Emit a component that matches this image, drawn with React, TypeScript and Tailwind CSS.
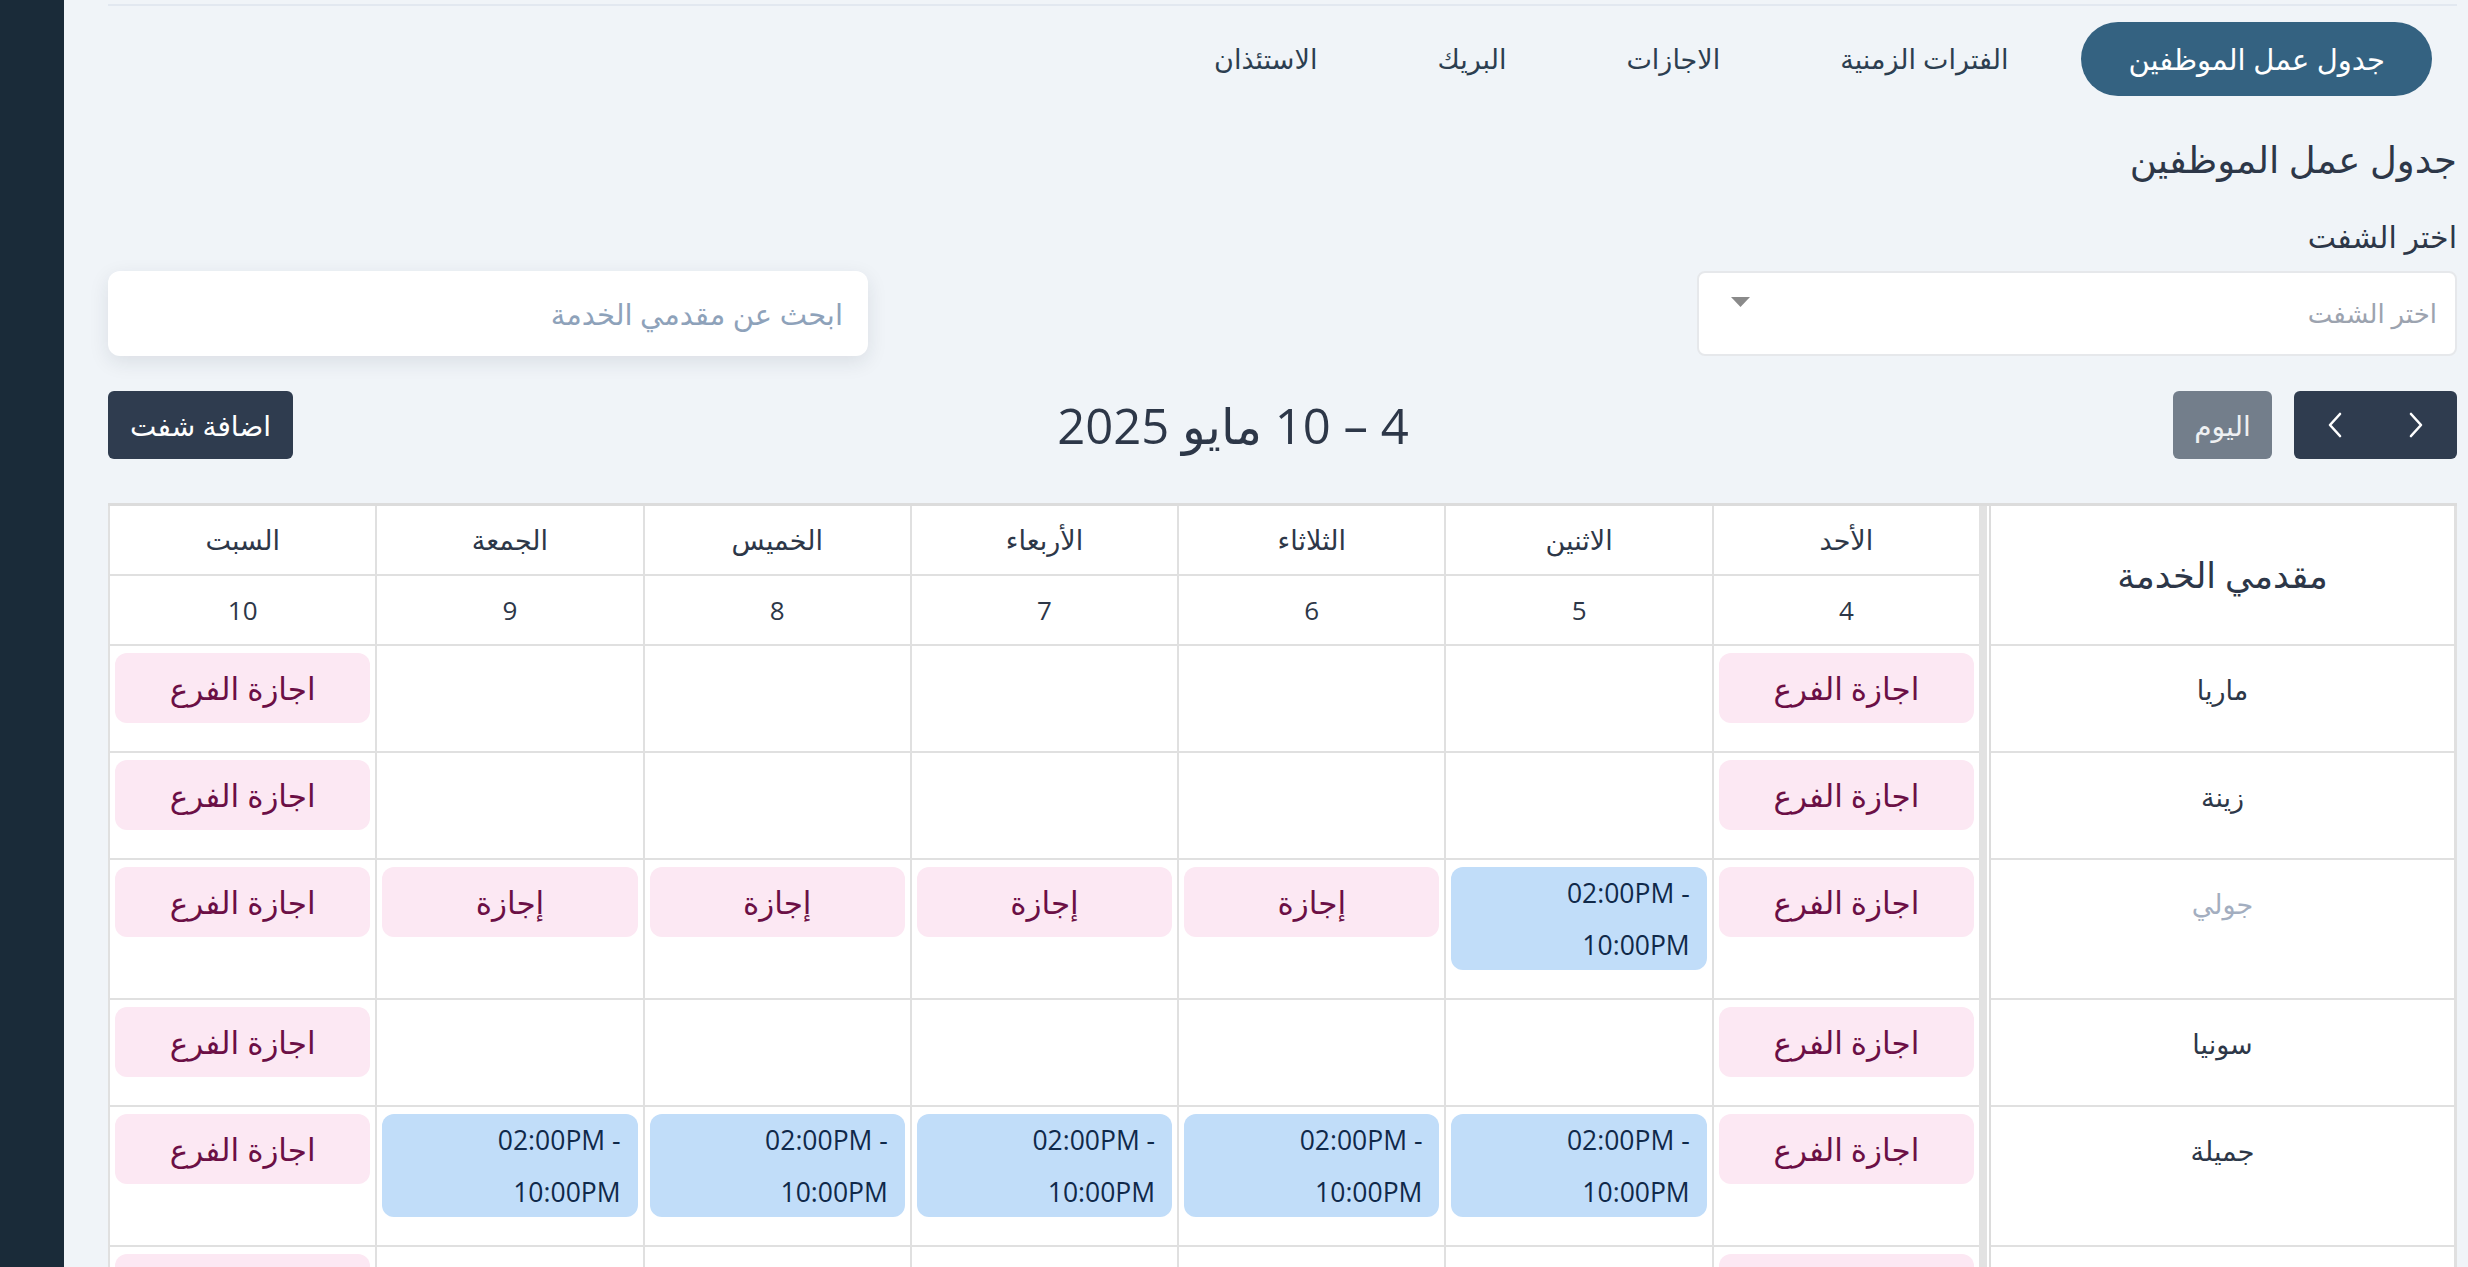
import React from 'react';

type Cell =
  | { kind: 'empty' }
  | { kind: 'leave'; label: string }
  | { kind: 'shift'; from: string; to: string };

interface Row {
  name: string;
  muted?: boolean;
  cells: Cell[];
}

const days = [
  { name: 'الأحد', date: 4 },
  { name: 'الاثنين', date: 5 },
  { name: 'الثلاثاء', date: 6 },
  { name: 'الأربعاء', date: 7 },
  { name: 'الخميس', date: 8 },
  { name: 'الجمعة', date: 9 },
  { name: 'السبت', date: 10 },
];

const tabs = ['جدول عمل الموظفين', 'الفترات الزمنية', 'الاجازات', 'البريك', 'الاستئذان'];

const E: Cell = { kind: 'empty' };
const BR: Cell = { kind: 'leave', label: 'اجازة الفرع' };
const LV: Cell = { kind: 'leave', label: 'إجازة' };
const SH: Cell = { kind: 'shift', from: '02:00PM -', to: '10:00PM' };

const rows: Row[] = [
  { name: 'ماريا', cells: [BR, E, E, E, E, E, BR] },
  { name: 'زينة', cells: [BR, E, E, E, E, E, BR] },
  { name: 'جولي', muted: true, cells: [BR, SH, LV, LV, LV, LV, BR] },
  { name: 'سونيا', cells: [BR, E, E, E, E, E, BR] },
  { name: 'جميلة', cells: [BR, SH, SH, SH, SH, SH, BR] },
  { name: 'نورة', cells: [BR, E, E, E, E, E, BR] },
];

const font = { fontFamily: '"Open Sans", "Noto Sans", "DejaVu Sans", sans-serif' };

const Divider = () => (
  <div className="flex shrink-0">
    <div className="w-[2px] bg-[#dcdcdc]" />
    <div className="w-[2px] bg-white" />
    <div className="w-[8px] bg-[#e2e2e2]" />
  </div>
);

const ScheduleCell = ({ cell }: { cell: Cell }) => (
  <div className="border-l-2 border-b-2 border-[#e0e0e0] px-[5px] pt-[7px] pb-[28px]">
    {cell.kind === 'leave' && (
      <div className="flex h-[70px] items-center justify-center rounded-xl bg-[#fce8f3] text-[31px] text-[#6b0f45]">
        {cell.label}
      </div>
    )}
    {cell.kind === 'shift' && (
      <div className="h-[103px] rounded-xl bg-[#c1ddf9] pr-[17px] text-[26.5px] leading-[52px] text-[#10294a]">
        <div dir="ltr" className="text-right">{cell.from}</div>
        <div dir="ltr" className="text-right">{cell.to}</div>
      </div>
    )}
  </div>
);

const Chevron = ({ dir }: { dir: 'left' | 'right' }) => (
  <svg width="16" height="26" viewBox="0 0 16 26" fill="none" stroke="white" strokeWidth="2.6" strokeLinecap="round" strokeLinejoin="round">
    {dir === 'left' ? <path d="M13 2 L3 13 L13 24" /> : <path d="M3 2 L13 13 L3 24" />}
  </svg>
);

export default function App() {
  return (
    <div className="flex min-h-screen bg-[#f0f4f8]" style={font}>
      <aside className="w-16 shrink-0 bg-[#1a2b39]" />
      <main dir="rtl" className="flex-1 pl-[44px] pr-[11px]">
        <div className="mt-1 h-[2px] bg-[#e2e8f0]" />

        <nav className="mt-4 flex gap-[26px] pr-[25px]">
          {tabs.map((t, i) => (
            <button
              key={t}
              className={`h-[74px] rounded-full px-[47px] ${
                i === 0 ? 'bg-[#346281] text-[29px] text-white' : 'text-[27px] text-[#2c3e50]'
              }`}
            >
              {t}
            </button>
          ))}
        </nav>

        <h1 className="mt-[38px] text-[37px] leading-[50px] text-[#2d3748]">جدول عمل الموظفين</h1>

        <div className="mt-[31px] text-[30px] leading-[44px] text-[#2d3748]">اختر الشفت</div>

        <div className="mt-[12px] flex justify-between">
          <div className="relative flex h-[85px] w-[760px] items-center rounded-lg border-2 border-[#e6e8eb] bg-white pr-[18px] text-[26px] text-[#9ca3af]">
            اختر الشفت
            <svg className="absolute left-[32px] top-[24px]" width="19" height="10" viewBox="0 0 19 10">
              <polygon points="0,0 19,0 9.5,10" fill="#8a8a8a" />
            </svg>
          </div>
          <div className="flex h-[85px] w-[760px] items-center rounded-xl bg-white pr-[25px] text-[29px] text-[#8ea2ba] shadow-[0_6px_20px_rgba(30,41,59,0.1)]">
            ابحث عن مقدمي الخدمة
          </div>
        </div>

        <div className="mt-[35px] flex items-center justify-between">
          <div className="flex gap-[22px]">
            <div className="flex h-[68px] w-[163px] overflow-hidden rounded-md bg-[#2f3c4f]">
              <button className="flex flex-1 items-center justify-center">
                <Chevron dir="right" />
              </button>
              <button className="flex flex-1 items-center justify-center">
                <Chevron dir="left" />
              </button>
            </div>
            <button className="h-[68px] w-[99px] rounded-md bg-[#737e8b] text-[28px] text-[#eef0f2]">اليوم</button>
          </div>
          <h2 className="text-[49px] leading-[68px] text-[#2d3748]">4 – 10 مايو 2025</h2>
          <button className="h-[68px] w-[185px] rounded-md bg-[#2f3c4f] text-[28px] text-white">اضافة شفت</button>
        </div>

        <div className="mt-[44px] bg-white text-[#2d3748]">
          <div className="flex border-t-[3px] border-[#dcdcdc]">
            <div className="flex w-[466px] shrink-0 items-center justify-center border-r-[3px] border-b-2 border-[#e0e0e0] text-[35px]">
              مقدمي الخدمة
            </div>
            <Divider />
            <div className="grid flex-1 grid-cols-7">
              {days.map((d) => (
                <div key={d.name} className="flex h-[70px] items-center justify-center border-l-2 border-b-2 border-[#e0e0e0] text-[27px]">
                  {d.name}
                </div>
              ))}
              {days.map((d) => (
                <div key={d.date} className="flex h-[70px] items-center justify-center border-l-2 border-b-2 border-[#e0e0e0] text-[26px]">
                  {d.date}
                </div>
              ))}
            </div>
          </div>

          {rows.map((r) => (
            <div key={r.name} className="flex">
              <div
                className={`w-[466px] shrink-0 border-r-[3px] border-b-2 border-[#e0e0e0] pt-[26px] text-center text-[27px] leading-[36px] ${
                  r.muted ? 'text-[#a3aec0]' : 'text-[#2d3748]'
                }`}
              >
                {r.name}
              </div>
              <Divider />
              <div className="grid flex-1 grid-cols-7">
                {r.cells.map((c, i) => (
                  <ScheduleCell key={i} cell={c} />
                ))}
              </div>
            </div>
          ))}
        </div>
      </main>
    </div>
  );
}
